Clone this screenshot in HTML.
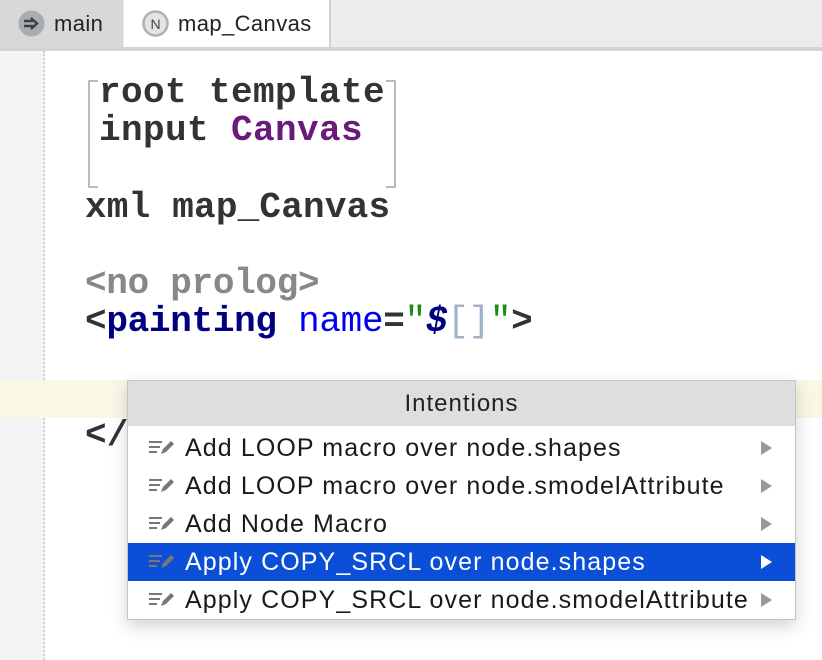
<!DOCTYPE html>
<html><head><style>
body{margin:0;width:822px;height:660px;background:#fff;position:relative;overflow:hidden;font-family:"Liberation Sans",sans-serif}
.tabs{position:absolute;left:0;top:0;width:822px;height:47px;background:#ececec;border-bottom:4px solid #d4d4d4}
.t1{position:absolute;left:0;top:0;width:123px;height:47px;background:#d8d8d8}
.t2{position:absolute;left:124px;top:0;width:205px;height:47px;background:#fff;border-right:2px solid #d0d0d0}
.tab-txt{position:absolute;top:11px;font-size:22px;letter-spacing:0.4px;color:#222}
.gutter{position:absolute;left:0;top:51px;width:43px;height:609px;background:#f4f4f4;border-right:2px dotted #d0d0d0}
.hl{position:absolute;left:0;top:380px;width:822px;height:38px;background:#fbf7e6}
.code{position:absolute;left:85px;font-family:"Liberation Mono",monospace;font-weight:bold;font-size:36px;line-height:38px;color:#333;white-space:pre;letter-spacing:0.2px}
.br{position:absolute;border:2px solid #bbb}
.pop{position:absolute;left:127px;top:380px;width:667px;height:238px;background:#fff;border:1px solid #c4c4c4;box-shadow:0 6px 16px rgba(0,0,0,.18)}
.hdr{height:45px;background:#dedede;text-align:center;font-size:24px;letter-spacing:1px;line-height:46px;color:#222}
.row{height:38px;position:relative;font-size:25px;letter-spacing:1.1px;line-height:38px;color:#1a1a1a}
.row span{position:absolute;left:57px}
.row svg{position:absolute;left:21px;top:10px}
.row .ar{position:absolute;left:633px;top:12px;width:0;height:0;border-left:11px solid #999;border-top:7px solid transparent;border-bottom:7px solid transparent}
.sel{background:#0b4fd9;color:#fff}
.sel .ar{border-left-color:#fff}
</style></head><body>
<div class="tabs">
<div class="t1"><svg style="position:absolute;left:18px;top:10px" width="27" height="27"><circle cx="13.5" cy="13.5" r="13" fill="#a9adb3"/><path d="M6 11h9M6 16h9M13 8l6 5.5-6 5.5" stroke="#3c3f44" stroke-width="2.4" fill="none"/></svg><div class="tab-txt" style="left:54px">main</div></div>
<div class="t2"><svg style="position:absolute;left:18px;top:10px" width="27" height="27"><circle cx="13.5" cy="13.5" r="12" fill="#e4e4e4" stroke="#aeb2b7" stroke-width="2.5"/><text x="13.5" y="19" font-size="14" text-anchor="middle" fill="#444" font-family="Liberation Sans">N</text></svg><div class="tab-txt" style="left:54px">map_Canvas</div></div>
</div>
<div class="gutter"></div>
<div class="hl"></div>
<div class="br" style="left:88px;top:80px;width:8px;height:104px;border-right:none"></div>
<div class="br" style="left:386px;top:80px;width:8px;height:104px;border-left:none"></div>
<div class="code" style="top:74px;left:99px;letter-spacing:0.4px">root template
input <span style="color:#6a1a7a">Canvas</span></div>
<div class="code" style="top:189px">xml map_Canvas</div>
<div class="code" style="top:265px;letter-spacing:-0.3px"><span style="color:#888">&lt;no prolog&gt;</span>
&lt;<span style="color:#000080">painting</span> <span style="color:#0000ee;font-weight:normal">name</span>=<span style="color:#1a8a1a;font-weight:normal">"</span><i style="color:#000080">$</i><span style="color:#9db3cc;font-weight:normal">[]</span><span style="color:#1a8a1a;font-weight:normal">"</span>&gt;</div>
<div class="code" style="top:417px">&lt;/</div>
<div class="pop">
<div class="hdr">Intentions</div>
<div style="height:3px"></div>
<div class="row"><svg width="26" height="18"><path d="M0 3h13M0 8h11M0 13h8" stroke="#777" stroke-width="2"/><path d="M12 15l2-5 8-8 3 3-8 8z" fill="#777"/></svg><span>Add LOOP macro over node.shapes</span><i class="ar"></i></div>
<div class="row"><svg width="26" height="18"><path d="M0 3h13M0 8h11M0 13h8" stroke="#777" stroke-width="2"/><path d="M12 15l2-5 8-8 3 3-8 8z" fill="#777"/></svg><span>Add LOOP macro over node.smodelAttribute</span><i class="ar"></i></div>
<div class="row"><svg width="26" height="18"><path d="M0 3h13M0 8h11M0 13h8" stroke="#777" stroke-width="2"/><path d="M12 15l2-5 8-8 3 3-8 8z" fill="#777"/></svg><span>Add Node Macro</span><i class="ar"></i></div>
<div class="row sel"><svg width="26" height="18"><path d="M0 3h13M0 8h11M0 13h8" stroke="#777" stroke-width="2"/><path d="M12 15l2-5 8-8 3 3-8 8z" fill="#777"/></svg><span>Apply COPY_SRCL over node.shapes</span><i class="ar"></i></div>
<div class="row"><svg width="26" height="18"><path d="M0 3h13M0 8h11M0 13h8" stroke="#777" stroke-width="2"/><path d="M12 15l2-5 8-8 3 3-8 8z" fill="#777"/></svg><span>Apply COPY_SRCL over node.smodelAttribute</span><i class="ar"></i></div>
</div>
</body></html>
